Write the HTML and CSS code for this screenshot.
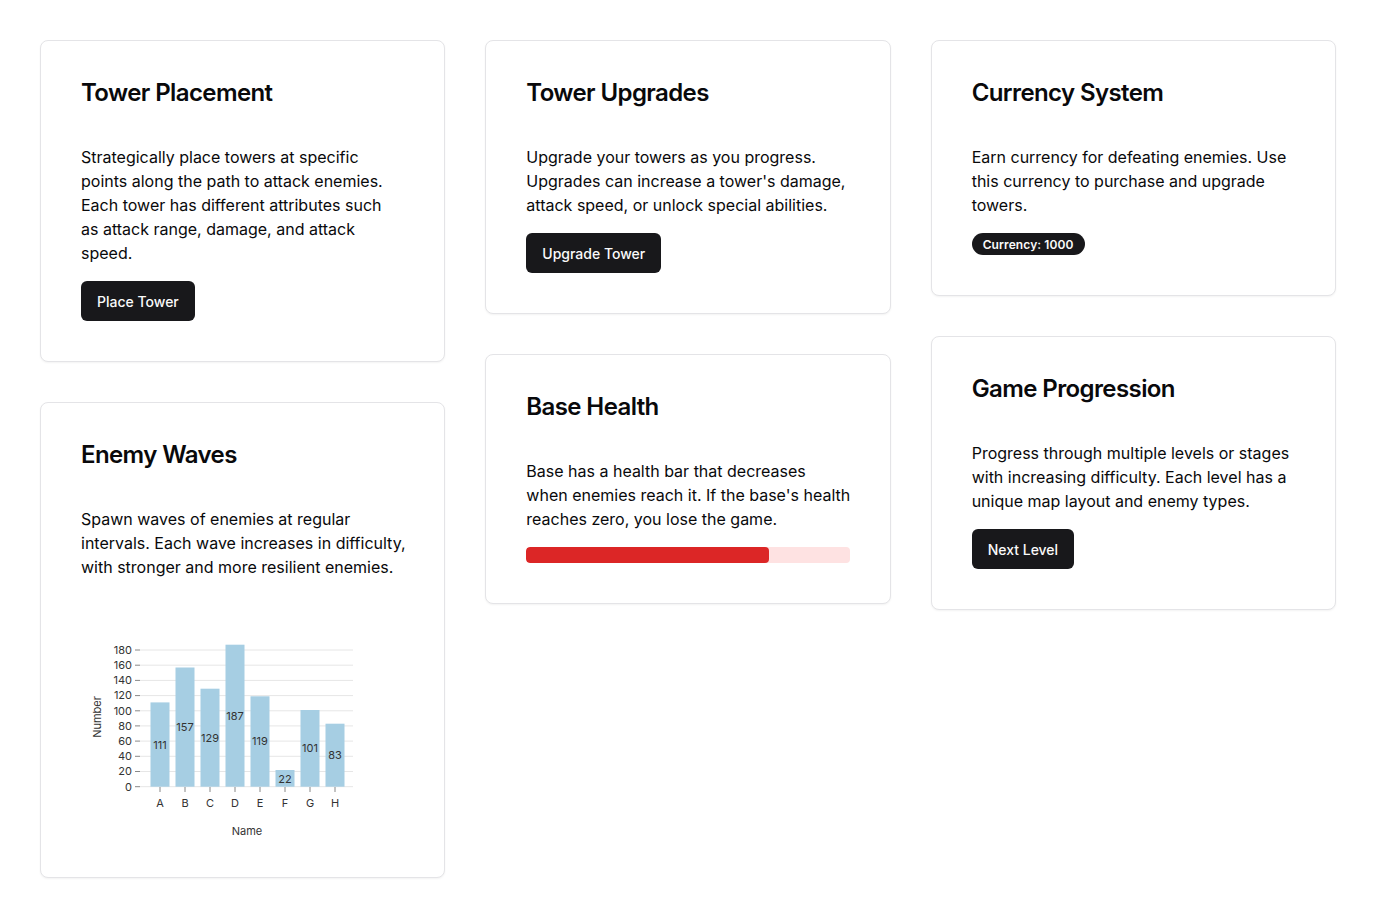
FILE: index.html
```html
<!DOCTYPE html>
<html lang="en">
<head>
<meta charset="utf-8">
<title>Tower Defense Features</title>
<link rel="stylesheet" href="styles.css">
</head>
<body>
<main class="board">
  <div class="column">
    <section class="card">
      <h2 class="card-title">Tower Placement</h2>
      <div class="card-content">
        <p class="text">Strategically place towers at specific<br>points along the path to attack enemies.<br>Each tower has different attributes such<br>as attack range, damage, and attack<br>speed.</p>
        <button class="btn">Place Tower</button>
      </div>
    </section>
    <section class="card">
      <h2 class="card-title">Enemy Waves</h2>
      <div class="card-content">
        <p class="text">Spawn waves of enemies at regular<br>intervals. Each wave increases in difficulty,<br>with stronger and more resilient enemies.</p>
        <svg class="chart" width="290" height="242" viewBox="0 0 290 242" xmlns="http://www.w3.org/2000/svg">
          <g class="grid">
            <line x1="59" x2="272" y1="191.7" y2="191.7"/>
            <line x1="59" x2="272" y1="176.5" y2="176.5"/>
            <line x1="59" x2="272" y1="161.3" y2="161.3"/>
            <line x1="59" x2="272" y1="146.1" y2="146.1"/>
            <line x1="59" x2="272" y1="130.9" y2="130.9"/>
            <line x1="59" x2="272" y1="115.8" y2="115.8"/>
            <line x1="59" x2="272" y1="100.6" y2="100.6"/>
            <line x1="59" x2="272" y1="85.4" y2="85.4"/>
            <line x1="59" x2="272" y1="70.2" y2="70.2"/>
            <line x1="59" x2="272" y1="55" y2="55"/>
          </g>
          <g class="ticks">
            <line x1="54" x2="59" y1="191.7" y2="191.7"/>
            <line x1="54" x2="59" y1="176.5" y2="176.5"/>
            <line x1="54" x2="59" y1="161.3" y2="161.3"/>
            <line x1="54" x2="59" y1="146.1" y2="146.1"/>
            <line x1="54" x2="59" y1="130.9" y2="130.9"/>
            <line x1="54" x2="59" y1="115.8" y2="115.8"/>
            <line x1="54" x2="59" y1="100.6" y2="100.6"/>
            <line x1="54" x2="59" y1="85.4" y2="85.4"/>
            <line x1="54" x2="59" y1="70.2" y2="70.2"/>
            <line x1="54" x2="59" y1="55" y2="55"/>
            <line x1="79" x2="79" y1="192" y2="197"/>
            <line x1="104" x2="104" y1="192" y2="197"/>
            <line x1="129" x2="129" y1="192" y2="197"/>
            <line x1="154" x2="154" y1="192" y2="197"/>
            <line x1="179" x2="179" y1="192" y2="197"/>
            <line x1="204" x2="204" y1="192" y2="197"/>
            <line x1="229" x2="229" y1="192" y2="197"/>
            <line x1="254" x2="254" y1="192" y2="197"/>
          </g>
          <g class="ylabels">
            <text x="51" y="191.7" dy="0.35em">0</text>
            <text x="51" y="176.5" dy="0.35em">20</text>
            <text x="51" y="161.3" dy="0.35em">40</text>
            <text x="51" y="146.1" dy="0.35em">60</text>
            <text x="51" y="130.9" dy="0.35em">80</text>
            <text x="51" y="115.8" dy="0.35em">100</text>
            <text x="51" y="100.6" dy="0.35em">120</text>
            <text x="51" y="85.4" dy="0.35em">140</text>
            <text x="51" y="70.2" dy="0.35em">160</text>
            <text x="51" y="55" dy="0.35em">180</text>
          </g>
          <g class="bars">
            <rect x="69.5" y="107.4" width="19" height="84.3"/>
            <rect x="94.5" y="72.5" width="19" height="119.2"/>
            <rect x="119.5" y="93.7" width="19" height="98"/>
            <rect x="144.5" y="49.7" width="19" height="142"/>
            <rect x="169.5" y="101.3" width="19" height="90.4"/>
            <rect x="194.5" y="175" width="19" height="16.7"/>
            <rect x="219.5" y="115" width="19" height="76.7"/>
            <rect x="244.5" y="128.7" width="19" height="63"/>
          </g>
          <g class="values">
            <text x="79" y="150.5" dy="0.35em">111</text>
            <text x="104" y="132.1" dy="0.35em">157</text>
            <text x="129" y="142.7" dy="0.35em">129</text>
            <text x="154" y="120.7" dy="0.35em">187</text>
            <text x="179" y="146.5" dy="0.35em">119</text>
            <text x="204" y="184.5" dy="0.35em">22</text>
            <text x="229" y="153.4" dy="0.35em">101</text>
            <text x="254" y="160.2" dy="0.35em">83</text>
          </g>
          <g class="xlabels">
            <text x="79" y="212">A</text>
            <text x="104" y="212">B</text>
            <text x="129" y="212">C</text>
            <text x="154" y="212">D</text>
            <text x="179" y="212">E</text>
            <text x="204" y="212">F</text>
            <text x="229" y="212">G</text>
            <text x="254" y="212">H</text>
          </g>
          <text class="axis-title" x="166" y="240">Name</text>
          <text class="axis-title" transform="translate(20,122) rotate(-90)">Number</text>
        </svg>
      </div>
    </section>
  </div>

  <div class="column">
    <section class="card">
      <h2 class="card-title">Tower Upgrades</h2>
      <div class="card-content">
        <p class="text">Upgrade your towers as you progress.<br>Upgrades can increase a tower's damage,<br>attack speed, or unlock special abilities.</p>
        <button class="btn">Upgrade Tower</button>
      </div>
    </section>
    <section class="card">
      <h2 class="card-title">Base Health</h2>
      <div class="card-content">
        <p class="text">Base has a health bar that decreases<br>when enemies reach it. If the base's health<br>reaches zero, you lose the game.</p>
        <div class="progress"><div class="progress-fill" style="width: 75%"></div></div>
      </div>
    </section>
  </div>

  <div class="column">
    <section class="card">
      <h2 class="card-title">Currency System</h2>
      <div class="card-content">
        <p class="text">Earn currency for defeating enemies. Use<br>this currency to purchase and upgrade<br>towers.</p>
        <span class="badge">Currency: 1000</span>
      </div>
    </section>
    <section class="card">
      <h2 class="card-title">Game Progression</h2>
      <div class="card-content">
        <p class="text">Progress through multiple levels or stages<br>with increasing difficulty. Each level has a<br>unique map layout and enemy types.</p>
        <button class="btn">Next Level</button>
      </div>
    </section>
  </div>
</main>
</body>
</html>
```

FILE: styles.css
```css
* {
  box-sizing: border-box;
}

html, body {
  margin: 0;
  padding: 0;
  background: #ffffff;
}

body {
  font-family: Inter, "Noto Sans", "Liberation Sans", sans-serif;
  color: #09090b;
}

.board {
  display: grid;
  grid-template-columns: repeat(3, minmax(0, 1fr));
  gap: 40px;
  padding: 40px;
  align-items: start;
}

.column {
  display: flex;
  flex-direction: column;
  gap: 40px;
  min-width: 0;
}

.card {
  background: #ffffff;
  border: 1px solid #e4e4e7;
  border-radius: 8px;
  box-shadow: 0 1px 2px 0 rgba(0, 0, 0, 0.05);
  padding: 40px;
  min-width: 0;
}

.card-title {
  margin: 0 0 40px 0;
  font-size: 24px;
  line-height: 24px;
  font-weight: 600;
  letter-spacing: -0.025em;
  color: #09090b;
}

.card-content {
  display: flex;
  flex-direction: column;
  align-items: flex-start;
  min-width: 0;
}

.text {
  margin: 0;
  font-size: 16px;
  line-height: 24px;
  color: #09090b;
  white-space: nowrap;
}

.btn {
  margin-top: 16px;
  height: 40px;
  padding: 0 16px;
  border: none;
  border-radius: 6px;
  background: #18181b;
  color: #fafafa;
  font-family: Inter, "Noto Sans", "Liberation Sans", sans-serif;
  font-size: 14px;
  font-weight: 500;
  cursor: pointer;
}

.badge {
  margin-top: 16px;
  display: inline-flex;
  align-items: center;
  height: 22px;
  padding: 0 11px;
  border-radius: 9999px;
  background: #18181b;
  color: #fafafa;
  font-size: 12px;
  font-weight: 600;
  letter-spacing: 0.1px;
}

.progress {
  margin-top: 16px;
  width: 100%;
  height: 16px;
  border-radius: 4px;
  background: #fee2e2;
  overflow: hidden;
}

.progress-fill {
  height: 100%;
  background: #dc2626;
  border-radius: 4px;
}

.chart {
  display: block;
  margin-top: 16px;
  font-family: Inter, "Noto Sans", "Liberation Sans", sans-serif;
}

.chart .grid line {
  stroke: #e6e6e6;
  stroke-width: 1;
}

.chart .ticks line {
  stroke: #888888;
  stroke-width: 1;
}

.chart .ylabels text {
  font-size: 11px;
  fill: #333333;
  text-anchor: end;
}

.chart .bars rect {
  fill: #a6cee3;
}

.chart .values text {
  font-size: 11px;
  fill: #333333;
  text-anchor: middle;
}

.chart .xlabels text {
  font-size: 11px;
  fill: #333333;
  text-anchor: middle;
}

.chart .axis-title {
  font-size: 11px;
  fill: #333333;
  text-anchor: middle;
}
```
